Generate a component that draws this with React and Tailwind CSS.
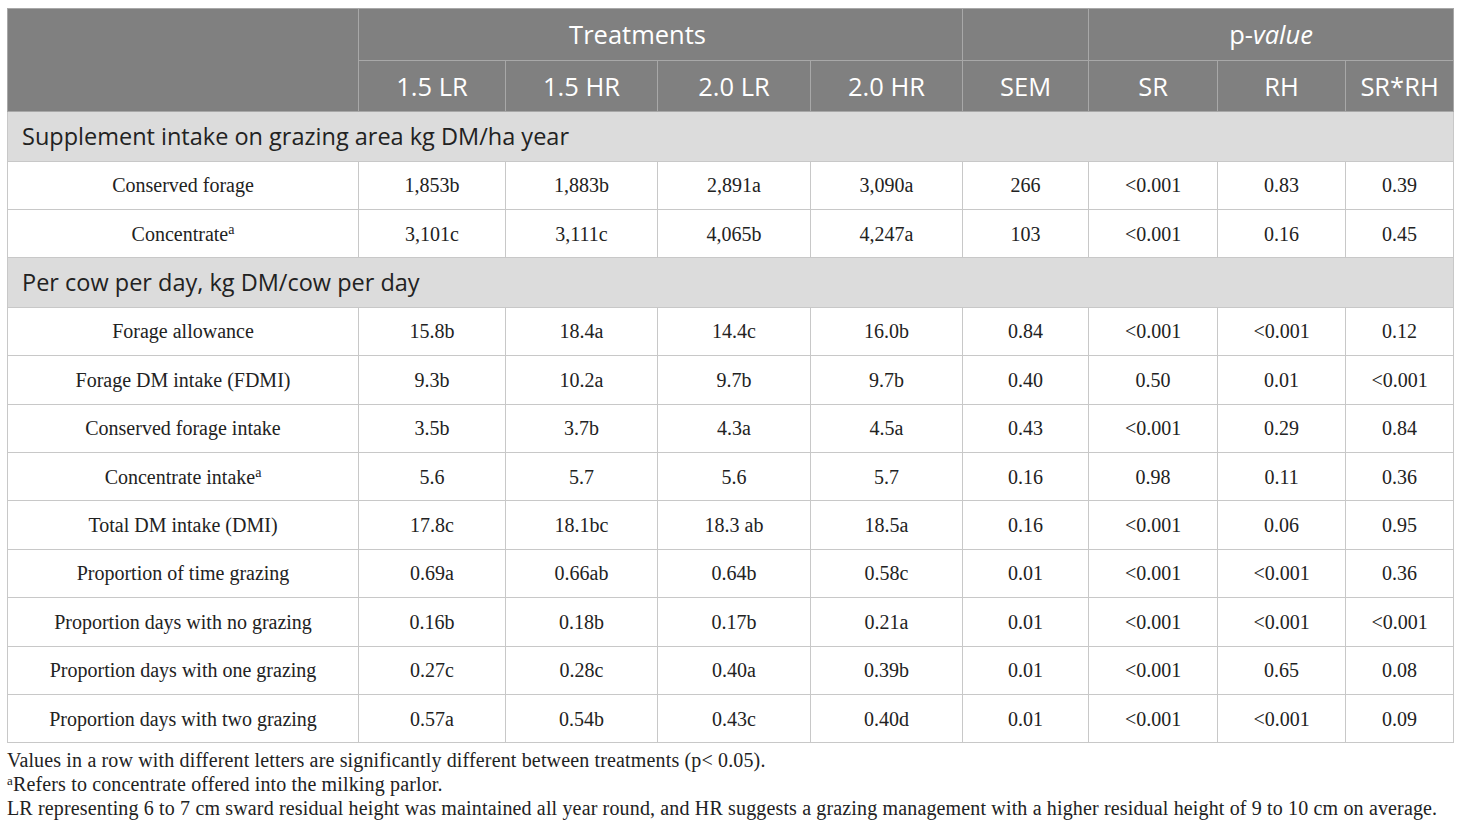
import React from "react";

const cols = [351, 147, 152, 153, 152, 126, 129, 128, 108];

const section1 = [
  ["Conserved forage", null, "1,853b", "1,883b", "2,891a", "3,090a", "266", "<0.001", "0.83", "0.39"],
  ["Concentrate", "a", "3,101c", "3,111c", "4,065b", "4,247a", "103", "<0.001", "0.16", "0.45"],
];

const section2 = [
  ["Forage allowance", null, "15.8b", "18.4a", "14.4c", "16.0b", "0.84", "<0.001", "<0.001", "0.12"],
  ["Forage DM intake (FDMI)", null, "9.3b", "10.2a", "9.7b", "9.7b", "0.40", "0.50", "0.01", "<0.001"],
  ["Conserved forage intake", null, "3.5b", "3.7b", "4.3a", "4.5a", "0.43", "<0.001", "0.29", "0.84"],
  ["Concentrate intake", "a", "5.6", "5.7", "5.6", "5.7", "0.16", "0.98", "0.11", "0.36"],
  ["Total DM intake (DMI)", null, "17.8c", "18.1bc", "18.3 ab", "18.5a", "0.16", "<0.001", "0.06", "0.95"],
  ["Proportion of time grazing", null, "0.69a", "0.66ab", "0.64b", "0.58c", "0.01", "<0.001", "<0.001", "0.36"],
  ["Proportion days with no grazing", null, "0.16b", "0.18b", "0.17b", "0.21a", "0.01", "<0.001", "<0.001", "<0.001"],
  ["Proportion days with one grazing", null, "0.27c", "0.28c", "0.40a", "0.39b", "0.01", "<0.001", "0.65", "0.08"],
  ["Proportion days with two grazing", null, "0.57a", "0.54b", "0.43c", "0.40d", "0.01", "<0.001", "<0.001", "0.09"],
];

const sans = "font-['Open_Sans',sans-serif]";
const serif = "font-['Liberation_Serif',serif]";

function DataRow({ row }) {
  const [label, sup, ...vals] = row;
  const cell = "border border-[#c8c8c8] text-center text-[20px] text-[#222]";
  return (
    <tr className="h-[48.4px]">
      <td className={cell}>
        {label}
        {sup && <sup className="text-[14px]">{sup}</sup>}
      </td>
      {vals.map((v, i) => (
        <td key={i} className={cell}>
          {v}
        </td>
      ))}
    </tr>
  );
}

function SectionRow({ title }) {
  return (
    <tr className="h-[49.5px] bg-[#dcdcdc]">
      <td colSpan={9} className={`border border-[#c8c8c8] pl-[14px] text-left text-[23.5px] text-[#222] ${sans}`}>
        {title}
      </td>
    </tr>
  );
}

export default function App() {
  const th = "border border-[#a8a8a8] text-center font-normal text-[25.5px] text-white";
  return (
    <div className={`bg-white w-[1460px] h-[830px] pt-[8px] pl-[7px] ${serif}`}>
      <table className="border-collapse table-fixed w-[1446px]">
        <colgroup>
          {cols.map((w, i) => (
            <col key={i} style={{ width: w }} />
          ))}
        </colgroup>
        <thead className={`bg-[#808080] ${sans}`}>
          <tr className="h-[52px]">
            <th rowSpan={2} className={th}></th>
            <th colSpan={4} className={`${th} pr-[46px]`}>Treatments</th>
            <th className={th}></th>
            <th colSpan={3} className={th}>
              p-<span className="italic">value</span>
            </th>
          </tr>
          <tr className="h-[51px]">
            <th className={th}>1.5 LR</th>
            <th className={th}>1.5 HR</th>
            <th className={th}>2.0 LR</th>
            <th className={th}>2.0 HR</th>
            <th className={th}>SEM</th>
            <th className={th}>SR</th>
            <th className={th}>RH</th>
            <th className={th}>SR*RH</th>
          </tr>
        </thead>
        <tbody>
          <SectionRow title="Supplement intake on grazing area kg DM/ha year" />
          {section1.map((r, i) => (
            <DataRow key={i} row={r} />
          ))}
          <SectionRow title="Per cow per day, kg DM/cow per day" />
          {section2.map((r, i) => (
            <DataRow key={i} row={r} />
          ))}
        </tbody>
      </table>
      <div className="mt-[5px] text-[20px] leading-[24px] text-[#222] tracking-[0.15px]">
        <p>Values in a row with different letters are significantly different between treatments (p&lt; 0.05).</p>
        <p>
          <sup className="text-[13px]">a</sup>Refers to concentrate offered into the milking parlor.
        </p>
        <p>
          LR representing 6 to 7 cm sward residual height was maintained all year round, and HR suggests a grazing management with a higher residual height of 9 to 10 cm on average.
        </p>
      </div>
    </div>
  );
}
